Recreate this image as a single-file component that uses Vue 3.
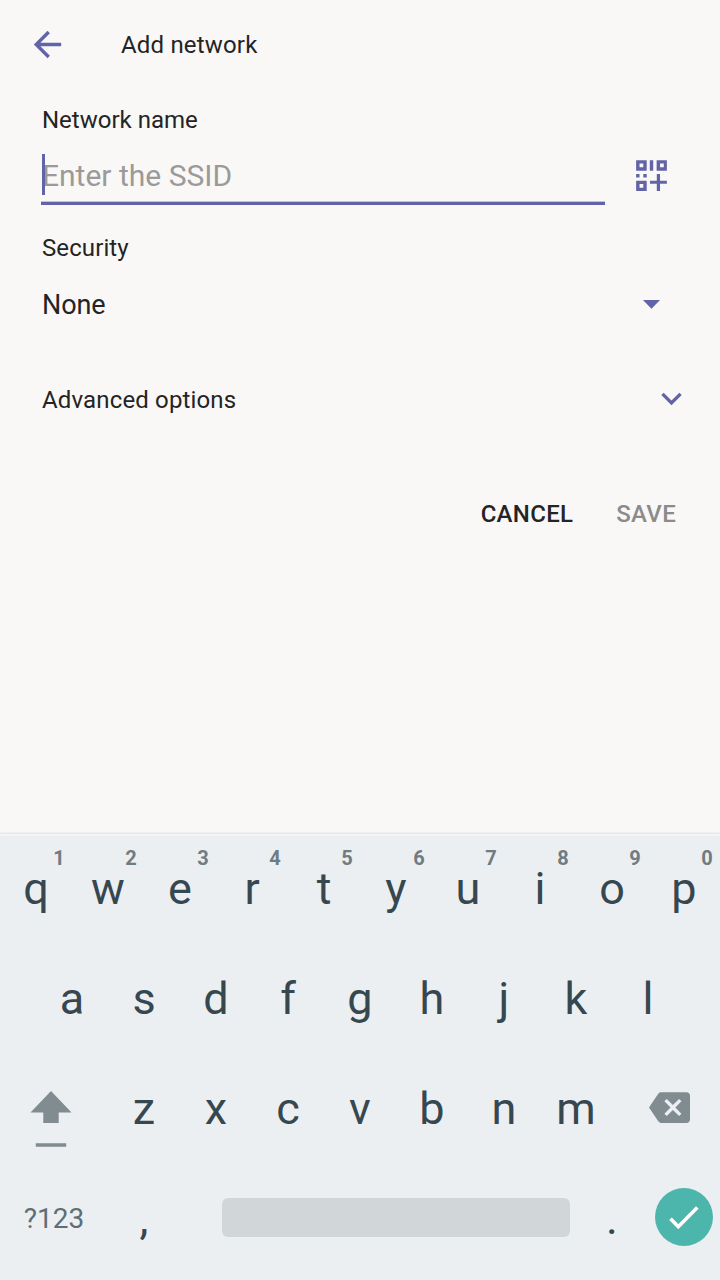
<template>
  <div class="screen">
    <header class="app-bar">
      <svg class="icon" viewBox="0 0 24 24">
        <path d="M20 11H7.83l5.59-5.59L12 4l-8 8 8 8 1.41-1.41L7.83 13H20v-2z" />
      </svg>
      <h1>Add network</h1>
    </header>

    <main class="form">
      <div class="label name-label">Network name</div>
      <div class="ssid-row">
        <div class="ssid-input">
          <span class="caret"></span>
          <span>Enter the SSID</span>
        </div>
        <svg class="icon" viewBox="0 0 24 24">
          <path fill-rule="evenodd" d="M3 3h6.2v6.2H3zM5 5v2.2h2.2V5zM15 3h6v6.2h-6zM17 5v2.2h2.2V5zM3 15h6.2v6H3zM5 17v2.1h2.2V17z" />
          <path d="M11 3h2v6.2h-2zM3 11.1h2v2H3zM7.2 11.1h2v2h-2zM15.1 11.1h1.9v4h4v1.8h-4V21h-1.9v-4.1h-4v-1.8h4z" />
        </svg>
      </div>

      <div class="label security-label">Security</div>
      <div class="security-row">
        <span>None</span>
        <svg class="icon" viewBox="0 0 24 24">
          <path d="M7 10l5 5 5-5z" />
        </svg>
      </div>

      <div class="advanced-row">
        <span class="label">Advanced options</span>
        <svg class="icon" viewBox="0 0 24 24">
          <path d="M7.41 8.59L12 13.17l4.59-4.58L18 10l-6 6-6-6z" />
        </svg>
      </div>

      <div class="actions">
        <button class="cancel">CANCEL</button>
        <button class="save" disabled>SAVE</button>
      </div>
    </main>

    <section class="keyboard">
      <div class="key-row">
        <div v-for="(key, index) in topRow" :key="key" class="key">
          {{ key }}
          <span class="hint">{{ (index + 1) % 10 }}</span>
        </div>
      </div>
      <div class="key-row">
        <div v-for="key in middleRow" :key="key" class="key">{{ key }}</div>
      </div>
      <div class="key-row">
        <div class="key wide shift">
          <svg viewBox="0 0 42 58">
            <path d="M21 1L41.5 22.5H28.7V33H13.3V22.5H.5zM5.8 53.2h30.4v3.6H5.8z" />
          </svg>
        </div>
        <div v-for="key in bottomRow" :key="key" class="key">{{ key }}</div>
        <div class="key wide backspace">
          <svg viewBox="0 0 24 24">
            <path d="M22 3H7c-.69 0-1.23.35-1.59.88L0 12l5.41 8.11c.36.53.9.89 1.59.89h15c1.1 0 2-.9 2-2V5c0-1.1-.9-2-2-2zm-3 12.59L17.59 17 14 13.41 10.41 17 9 15.59 12.59 12 9 8.41 10.41 7 14 10.59 17.59 7 19 8.41 15.41 12 19 15.59z" />
          </svg>
        </div>
      </div>
      <div class="key-row">
        <div class="key wide symbols">?123</div>
        <div class="key">,</div>
        <div class="space"></div>
        <div class="key period">.</div>
        <div class="key enter">
          <svg viewBox="0 0 58 58">
            <circle cx="29" cy="29" r="29" />
            <path d="M15.5 30.8l7.8 8L42.3 19.6" />
          </svg>
        </div>
      </div>
    </section>
  </div>
</template>

<script setup>
const topRow = 'qwertyuiop'.split('');
const middleRow = 'asdfghjkl'.split('');
const bottomRow = 'zxcvbnm'.split('');
</script>

<style>
body {
  margin: 0;
}
</style>

<style scoped>
.screen {
  display: flex;
  flex-direction: column;
  width: 720px;
  height: 1280px;
  overflow: hidden;
  background: #f9f8f7;
  color: #242424;
  font-family: Roboto, sans-serif;
}

.icon {
  display: block;
  flex: none;
  width: 41px;
  height: 41px;
  fill: #6264a7;
}

.app-bar {
  display: flex;
  align-items: center;
  height: 90px;
  padding-left: 27px;
}

.app-bar .icon {
  margin-bottom: 2px;
}

.app-bar h1 {
  margin: 0 0 0 53px;
  font-size: 24px;
  font-weight: 400;
  line-height: 30px;
  letter-spacing: 0.18px;
}

.form {
  flex: 1;
}

.label {
  padding-left: 42px;
  font-size: 24px;
  line-height: 30px;
}

.name-label {
  padding-top: 15px;
}

.security-label {
  letter-spacing: 0.1px;
}

.ssid-row {
  display: flex;
  align-items: center;
  margin-bottom: 28px;
}

.ssid-row .icon {
  margin: 11px 0 0 26px;
}

.ssid-input {
  position: relative;
  box-sizing: border-box;
  width: 564px;
  height: 70px;
  margin-left: 41px;
  padding: 11px 0 0 1px;
  border-bottom: 3px solid #6264a7;
  box-shadow: inset 0 -1px #c3c3dc;
  color: #9b9a99;
  font-size: 30px;
  line-height: 60px;
}

.caret {
  position: absolute;
  top: 19px;
  left: 1px;
  width: 3px;
  height: 41px;
  background: #6264a7;
}

.security-row {
  display: flex;
  align-items: center;
  justify-content: space-between;
  height: 82px;
  padding: 0 48px 0 42px;
  font-size: 27px;
}

.security-row span {
  padding-top: 2px;
  letter-spacing: -0.1px;
}

.security-row .icon {
  margin-bottom: 2px;
}

.advanced-row {
  display: flex;
  align-items: center;
  justify-content: space-between;
  height: 60px;
  margin-top: 25px;
  padding-right: 28px;
}

.advanced-row .label {
  letter-spacing: 0.15px;
}

.advanced-row .icon {
  margin-bottom: 3px;
}

.actions {
  display: flex;
  justify-content: flex-end;
  gap: 43px;
  margin-top: 69px;
  padding-right: 44px;
}

.actions button {
  padding: 0;
  border: 0;
  background: none;
  color: #242424;
  font-family: inherit;
  font-size: 24px;
  font-weight: 500;
  line-height: 30px;
  letter-spacing: 0.3px;
}

.actions .save {
  color: #8c8b8a;
}

.keyboard {
  height: 446px;
  box-sizing: border-box;
  border-top: 2px solid #f3f5f6;
  background: #ebeff2;
  box-shadow: 0 -1px 2px rgba(0, 0, 0, 0.1);
  color: #37474f;
}

.key-row {
  display: flex;
  justify-content: center;
  align-items: center;
  height: 110px;
}

.key-row:first-child {
  box-sizing: border-box;
  height: 108px;
  padding-bottom: 2px;
}

.key {
  position: relative;
  flex: none;
  width: 72px;
  font-size: 45px;
  line-height: 110px;
  text-align: center;
}

.hint {
  position: absolute;
  top: 12px;
  left: 49px;
  width: 20px;
  color: #6f7c81;
  font-size: 20px;
  font-weight: 700;
  line-height: 24px;
}

.wide {
  width: 108px;
}

.key svg {
  display: block;
}

.shift svg {
  width: 42px;
  height: 58px;
  margin: 20px 0 0 29.5px;
  fill: #808c90;
}

.backspace svg {
  width: 41px;
  height: 41px;
  margin: 0 0 3px 37px;
  fill: #808c90;
}

.symbols {
  color: #5f6e74;
  font-size: 28px;
}

.space {
  width: 348px;
  height: 39px;
  margin: 0 6px 3px 42px;
  border-radius: 6px;
  background: #d1d6d9;
}

.enter svg {
  width: 58px;
  height: 58px;
  margin: 0 0 4px 7px;
  fill: #4db6ac;
}

.enter path {
  fill: none;
  stroke: #fff;
  stroke-width: 3.6;
}
</style>
